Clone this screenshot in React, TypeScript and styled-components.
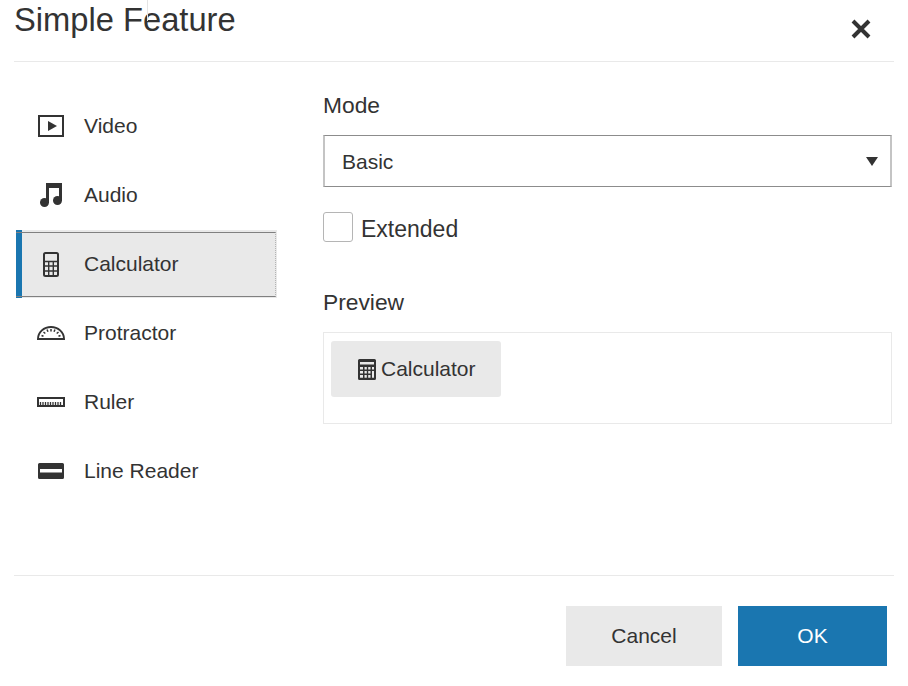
import React from 'react';
import styled, { createGlobalStyle } from 'styled-components';

const GlobalStyle = createGlobalStyle`
  html, body {
    margin: 0;
    padding: 0;
    background: #fff;
  }
  body {
    font-family: "Liberation Sans", Arial, sans-serif;
    color: #333;
  }
`;

const Dialog = styled.div`
  width: 880px;
  height: 686px;
  margin-left: 14px;
  display: flex;
  flex-direction: column;
`;

const Header = styled.header`
  height: 61px;
  flex: none;
  display: flex;
  justify-content: space-between;
  border-bottom: 1px solid #e9e9e9;
  position: relative;
`;

const Title = styled.h1`
  margin: 0;
  font-size: 32.7px;
  line-height: 40px;
  font-weight: 400;
  color: #333;
`;

// thin stray line across the title, it is in the original capture too
const TitleMark = styled.span`
  position: absolute;
  left: 133px;
  top: 0;
  width: 1px;
  height: 21px;
  background: #e4e4e4;
`;

const CloseButton = styled.button`
  width: 24px;
  height: 24px;
  margin: 17px 21px 0 0;
  padding: 0;
  border: 0;
  background: none;
  color: #333;
`;

const Body = styled.div`
  height: 513px;
  flex: none;
  display: flex;
`;

const Sidebar = styled.nav`
  width: 261px;
  margin-left: 2px;
  padding-top: 30px;
  flex: none;
  display: flex;
  flex-direction: column;
  gap: 1px;
`;

const NavItem = styled.div<{ $active?: boolean }>`
  height: 68px;
  box-sizing: border-box;
  display: flex;
  align-items: center;
  font-size: 21px;
  color: #333;
  position: relative;
  padding-left: ${(p) => (p.$active ? '0' : '6px')};
  ${(p) =>
    p.$active &&
    `
    background: #e9e9e9;
    border-left: 6px solid #1a76b0;
    &::after {
      content: '';
      position: absolute;
      inset: 2px 1px 1px -6px;
      border-top: 1px solid #808080;
      border-bottom: 1px solid #808080;
      border-right: 1px dotted #b4b4b4;
    }
  `}
`;

const NavIcon = styled.span`
  width: 46px;
  margin: 0 10px 0 6px;
  display: flex;
  justify-content: center;
  align-items: center;
  color: #333;
`;

const Content = styled.section`
  width: 569px;
  margin-left: 46px;
  padding-top: 29px;
  flex: none;
  display: flex;
  flex-direction: column;
`;

const FieldLabel = styled.div`
  font-size: 22.800px;
  line-height: 28px;
  color: #333;
`;

const Select = styled.div`
  height: 52px;
  margin-top: 16px;
  box-sizing: border-box;
  display: flex;
  align-items: center;
  justify-content: space-between;
  padding: 0 12px 0 17px;
  border-style: solid;
  border-width: 1px 2px;
  border-color: #8c8c8c #c4c4c4;
  font-size: 21px;
`;

const SelectValue = styled.span`
  padding-top: 2px;
`;

const Caret = styled.span`
  width: 0;
  height: 0;
  border-left: 6px solid transparent;
  border-right: 6px solid transparent;
  border-top: 9px solid #333;
`;

const CheckRow = styled.label`
  height: 30px;
  margin-top: 25px;
  display: flex;
  align-items: flex-start;
  gap: 8px;
  font-size: 23px;
  line-height: 30px;
`;

const CheckBox = styled.span`
  width: 30px;
  height: 30px;
  box-sizing: border-box;
  border: 1px solid #b5b5b5;
  border-radius: 3px;
`;

const CheckText = styled.span`
  padding-top: 2px;
`;

const PreviewLabel = styled(FieldLabel)`
  margin-top: 46px;
`;

const PreviewBox = styled.div`
  height: 92px;
  margin-top: 16px;
  box-sizing: border-box;
  padding: 8px 7px;
  border: 1px solid #e9e9e9;
`;

const PreviewButton = styled.div`
  width: 170px;
  height: 56px;
  box-sizing: border-box;
  padding-left: 27px;
  display: flex;
  align-items: center;
  gap: 5px;
  border-radius: 3px;
  background: #e9e9e9;
  font-size: 21px;
  color: #333;
`;

const Footer = styled.footer`
  flex: 1;
  display: flex;
  justify-content: flex-end;
  align-items: flex-start;
  gap: 16px;
  padding: 30px 7px 0 0;
  border-top: 1px solid #e9e9e9;
`;

const Button = styled.button<{ $primary?: boolean }>`
  height: 60px;
  width: ${(p) => (p.$primary ? '149px' : '156px')};
  border: 0;
  padding: 0;
  font-family: inherit;
  font-size: 21px;
  background: ${(p) => (p.$primary ? '#1a76b0' : '#e9e9e9')};
  color: ${(p) => (p.$primary ? '#fff' : '#333')};
`;

const VideoIcon = () => (
  <svg width="26" height="22" viewBox="0 0 26 22">
    <rect x="1" y="1" width="24" height="20" fill="none" stroke="currentColor" strokeWidth="2" />
    <path d="M10 6l9 5-9 5z" fill="currentColor" />
  </svg>
);

const AudioIcon = () => (
  <svg width="22" height="24" viewBox="0 0 22 24">
    <path d="M6 0h16v18h-3V5H9v15H6z" fill="currentColor" />
    <circle cx="4.500" cy="19.500" r="4.500" fill="currentColor" />
    <circle cx="17.500" cy="17.500" r="4.500" fill="currentColor" />
  </svg>
);

const CalcIcon = () => (
  <svg width="16" height="25" viewBox="0 0 16 25">
    <rect x="1" y="1" width="14" height="23" rx="1.500" fill="none" stroke="currentColor" strokeWidth="2" />
    <path
      d="M1 9.500h14M1 14h14M1 19h14M5.700 9.500V24M10.300 9.500V24"
      fill="none"
      stroke="currentColor"
      strokeWidth="1.400"
    />
  </svg>
);

const ProtractorIcon = () => (
  <svg width="28" height="14" viewBox="0 0 28 14">
    <path d="M1 13C1 6 7 1 14 1s13 5 13 12z" fill="none" stroke="currentColor" strokeWidth="2" />
    <path
      d="M4.500 9.500l2 .8M6.500 6l1.800 1.500M10 3.500l1 2.200M14 3v2.500M18 3.500l-1 2.200M21.500 6l-1.800 1.500M23.500 9.500l-2 .8"
      stroke="currentColor"
      strokeWidth="1.500"
    />
  </svg>
);

const RulerIcon = () => (
  <svg width="28" height="10" viewBox="0 0 28 10">
    <rect x="1" y="1" width="26" height="8" fill="none" stroke="currentColor" strokeWidth="2" />
    <path
      d="M3.500 5v4M6 5v4M8.500 5v4M11 5v4M13.500 5v4M16 5v4M18.500 5v4M21 5v4M23.500 5v4"
      stroke="currentColor"
      strokeWidth="1.300"
    />
  </svg>
);

const LineReaderIcon = () => (
  <svg width="26" height="16" viewBox="0 0 26 16">
    <path
      d="M1.500 0h23A1.500 1.500 0 0 1 26 1.500v13a1.500 1.500 0 0 1-1.500 1.500h-23A1.500 1.500 0 0 1 0 14.500v-13A1.500 1.500 0 0 1 1.500 0zM2 6v3.500h22V6z"
      fill="currentColor"
      fillRule="evenodd"
    />
  </svg>
);

const PreviewCalcIcon = () => (
  <svg width="18" height="21" viewBox="0 0 18 21">
    <path
      d="M1.500 0h15A1.500 1.500 0 0 1 18 1.500v18a1.500 1.500 0 0 1-1.500 1.500h-15A1.500 1.500 0 0 1 0 19.500v-18A1.500 1.500 0 0 1 1.500 0zM2 3v2.500h14V3zM2 8v2.500h3V8zM6.500 8v2.500h2.300V8zM10.200 8v2.500h2.300V8zM14 8v2.500h2V8zM2 12v2.500h3V12zM6.500 12v2.500h2.300V12zM10.200 12v2.500h2.300V12zM14 12v6.800h2V12zM2 16v2.800h3V16zM6.500 16v2.800h2.300V16zM10.200 16v2.800h2.300V16z"
      fill="currentColor"
      fillRule="evenodd"
    />
  </svg>
);

const tools = [
  { name: 'Video', icon: <VideoIcon /> },
  { name: 'Audio', icon: <AudioIcon /> },
  { name: 'Calculator', icon: <CalcIcon />, active: true },
  { name: 'Protractor', icon: <ProtractorIcon /> },
  { name: 'Ruler', icon: <RulerIcon /> },
  { name: 'Line Reader', icon: <LineReaderIcon /> },
];

export default function App() {
  return (
    <>
      <GlobalStyle />
      <Dialog>
        <Header>
          <Title>Simple Feature</Title>
          <TitleMark />
          <CloseButton aria-label="Close">
            <svg width="24" height="24" viewBox="0 0 24 24">
              <path d="M4 4l16 16M20 4L4 20" stroke="currentColor" strokeWidth="4" />
            </svg>
          </CloseButton>
        </Header>
        <Body>
          <Sidebar>
            {tools.map((t) => (
              <NavItem key={t.name} $active={t.active}>
                <NavIcon>{t.icon}</NavIcon>
                {t.name}
              </NavItem>
            ))}
          </Sidebar>
          <Content>
            <FieldLabel>Mode</FieldLabel>
            <Select>
              <SelectValue>Basic</SelectValue>
              <Caret />
            </Select>
            <CheckRow>
              <CheckBox />
              <CheckText>Extended</CheckText>
            </CheckRow>
            <PreviewLabel>Preview</PreviewLabel>
            <PreviewBox>
              <PreviewButton>
                <PreviewCalcIcon />
                Calculator
              </PreviewButton>
            </PreviewBox>
          </Content>
        </Body>
        <Footer>
          <Button>Cancel</Button>
          <Button $primary>OK</Button>
        </Footer>
      </Dialog>
    </>
  );
}
